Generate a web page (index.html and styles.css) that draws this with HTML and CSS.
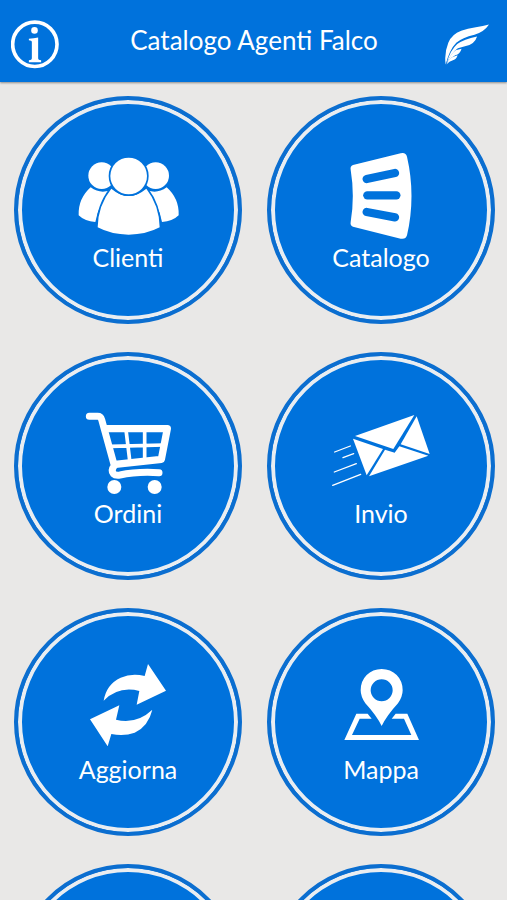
FILE: index.html
```html
<!DOCTYPE html>
<html lang="it">
  <head>
    <meta charset="UTF-8" />
    <meta name="viewport" content="width=device-width, initial-scale=1" />
    <title>Catalogo Agenti Falco</title>
    <link rel="stylesheet" href="styles.css">
  </head>
  <body>
    <header class="topbar">
      <button type="button" class="topbar-btn info" aria-label="Info">
        <svg viewBox="33 60 145 147">
          <circle cx="105" cy="133" r="67" fill="none" stroke="#fff" stroke-width="11" />
          <circle cx="104" cy="91" r="10" />
          <path d="M87 116 Q102 115 115 112 V175 Q115 181 124 181 V187 H87 V181 Q96 181 96 175 V127 Q96 121 87 121 Z" />
        </svg>
      </button>
      <h1>Catalogo Agenti Falco</h1>
      <button type="button" class="topbar-btn logo" aria-label="Falco">
        <svg viewBox="573 60 133 147">
          <path d="M706 73 Q692 95 662 104 Q625 113 607 128 Q587 148 575 194 Q570 160 583 128 Q594 102 622 92 Q641 85 666 81 Q688 78 706 73 Z" />
          <path d="M670 109 Q663 132 636 138 L612 145 Q594 157 579 187 Q589 151 610 132 Q630 117 670 109 Z" />
          <path d="M623 146 Q619 162 604 166 Q591 172 580 187 Q590 161 605 151 Z" />
          <path d="M611 166 Q608 178 597 181 Q586 184 577 194 Q585 176 596 171 Z" />
        </svg>
      </button>
    </header>

    <main class="menu">
      <button type="button" class="tile">
        <svg viewBox="-6 0 420 300" aria-hidden="true">
          <circle cx="125" cy="107" r="40" />
          <circle cx="287" cy="107" r="40" />
          <path d="M92 142 Q124 165 158 147 Q117 187 106 246 Q74 244 56 226 Q54 176 92 142 Z" />
          <path d="M320 142 Q288 165 254 147 Q295 187 306 246 Q338 244 356 226 Q358 176 320 142 Z" />
          <path class="cut" d="M154 146 Q206 190 259 146 Q298 196 299 262 Q258 284 206 284 Q154 284 113 262 Q114 196 154 146 Z" />
          <circle class="cut" cx="206" cy="108" r="55" />
        </svg>
        <span>Clienti</span>
      </button>

      <button type="button" class="tile">
        <svg viewBox="-12 0 420 300" aria-hidden="true">
          <path d="M114 75 L257 40 Q272 36 276 50 Q303 168 276 286 Q272 299 257 296 L114 260 Q105 257 107 246 Q120 168 107 89 Q105 78 114 75 Z" />
          <g class="slots">
            <path d="M155 117 L240 99" />
            <path d="M157 166 H244" />
            <path d="M155 216 L240 232" />
          </g>
        </svg>
        <span>Catalogo</span>
      </button>

      <button type="button" class="tile">
        <svg viewBox="-6 3 420 300" aria-hidden="true">
          <g class="line">
            <path stroke-width="21" d="M88 64 H113 Q122 64 125 74 L163 212 Q152 226 160 236 Q166 242 180 240 Q230 229 297 233" />
            <path stroke-width="22" d="M138 101 H322 L304 193 L166 208" />
            <path stroke-width="11" d="M152 154 L312 150 M198 104 L210 204 M254 104 L254 200" />
          </g>
          <circle cx="163" cy="276" r="21" />
          <circle cx="284" cy="276" r="21" />
        </svg>
        <span>Ordini</span>
      </button>

      <button type="button" class="tile">
        <svg viewBox="-12 3 420 300" aria-hidden="true">
          <path d="M120 123 L298 60 L235 162 Z" />
          <path d="M114 131 L204 162 L155 241 Z" />
          <path d="M305 64 L344 177 L257 148 Z" />
          <path d="M210 164 L239 173 L253 154 L340 182 L162 244 Z" />
          <g class="line" stroke-width="4">
            <path d="M59 171 L106 153 M84 188 L116 176 M58 231 L124 206 M53 271 L137 238" />
          </g>
        </svg>
        <span>Invio</span>
      </button>

      <button type="button" class="tile">
        <svg viewBox="-6 6 420 300" aria-hidden="true">
          <path d="M131 152 Q139 103 182 83 Q216 68 254 78 L264 42 L318 122 L230 164 L238 123 Q176 107 131 152 Z" />
          <path d="M277 179 Q265 229 224 248 Q192 260 154 252 L143 289 L90 208 L178 166 L168 209 Q229 224 277 179 Z" />
        </svg>
        <span>Aggiorna</span>
      </button>

      <button type="button" class="tile">
        <svg viewBox="-12 6 420 300" aria-hidden="true">
          <path fill-rule="evenodd" d="M200 57 Q227 57 245 75 Q263 93 263 121 Q263 140 249 160 Q216 196 200 228 Q184 196 151 160 Q137 140 137 121 Q137 93 155 75 Q173 57 200 57 Z M200 88 A33 33 0 1 0 200 154 A33 33 0 1 0 200 88 Z" />
          <path fill-rule="evenodd" d="M124 191 H158 L170 206 H134 L111 255 H289 L267 206 H230 L242 191 H277 L312 270 H88 Z" />
        </svg>
        <span>Mappa</span>
      </button>

      <button type="button" class="tile"></button>
      <button type="button" class="tile"></button>
    </main>
  </body>
</html>
```

FILE: styles.css
```css
* {
  box-sizing: border-box;
}
body {
  font-family: Lato, "Open Sans", sans-serif;
  background: #e9e8e7;
  color: white;
  margin: 0;
  height: 100vh;
  display: flex;
  flex-direction: column;
}
button {
  border: none;
  padding: 0;
  background: none;
  color: inherit;
  font: inherit;
  cursor: pointer;
}
svg {
  display: block;
  fill: white;
}

/* top bar */
.topbar {
  display: flex;
  align-items: flex-start;
  padding: 20px 18px 13px 11px;
  background: #0072dc;
  box-shadow: 0 1px 2px rgba(0, 0, 0, 0.4);
  z-index: 1;
}
.topbar h1 {
  flex: 1;
  margin: 0;
  padding: 4px 0 0 4px;
  font-size: 26px;
  line-height: 32px;
  font-weight: 400;
  text-align: center;
}
.topbar-btn svg {
  height: 49px;
}
.info svg {
  width: 48px;
}
.logo svg {
  width: 44px;
}

/* round menu buttons */
.menu {
  flex: 1;
  min-height: 0;
  overflow-y: auto;
  scrollbar-width: none;
  display: grid;
  grid-template-columns: 1fr 1fr;
  align-content: start;
  gap: 28px 25px;
  padding: 14px 12px 14px 14px;
}
.tile {
  display: flex;
  flex-direction: column;
  align-items: center;
  aspect-ratio: 1;
  padding-top: 40px;
  border: 4px solid #0b6ed0;
  border-radius: 50%;
  background: #0072dc;
  box-shadow: inset 0 0 0 4px #e9edf1;
  font-size: 25px;
  line-height: 34px;
}
.tile svg {
  width: 140px;
  height: 100px;
}
.cut {
  stroke: #0072dc;
  stroke-width: 10px;
  paint-order: stroke;
}
.slots {
  stroke: #0072dc;
  stroke-width: 25px;
  stroke-linecap: round;
}
.line {
  fill: none;
  stroke: white;
  stroke-linecap: round;
  stroke-linejoin: round;
}
```
